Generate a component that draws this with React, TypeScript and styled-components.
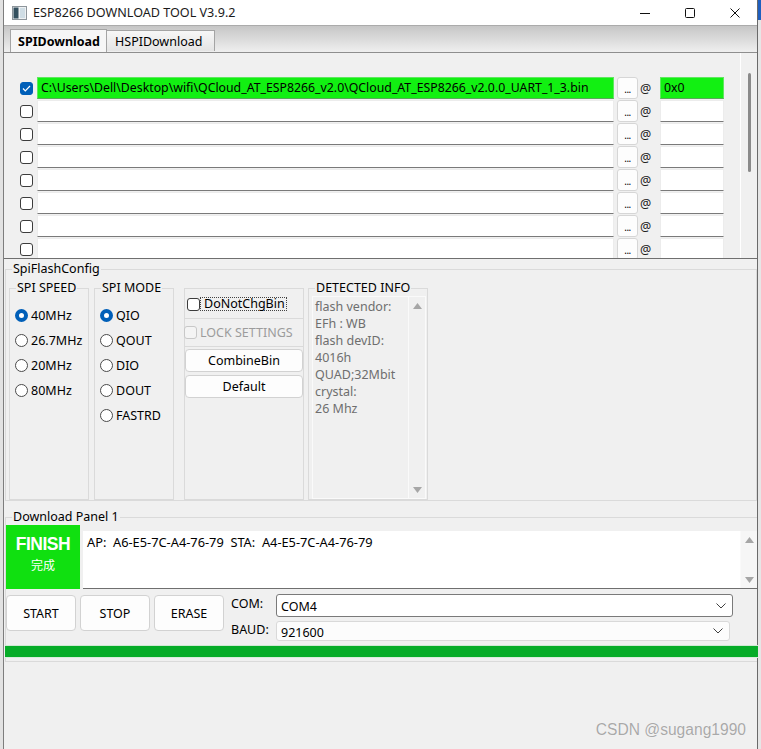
import React from "react";
import styled, { createGlobalStyle } from "styled-components";

const GlobalStyle = createGlobalStyle`
  html, body {
    margin: 0;
    padding: 0;
  }
  body {
    background: #ececec;
    font-family: "Noto Sans", "Noto Sans CJK SC", sans-serif;
    font-size: 12.5px;
    color: #000;
  }
`;

const Screen = styled.div`
  width: 761px;
  height: 749px;
  display: flex;
  overflow: hidden;
  position: relative;
  background: #ececec;
`;

const Gutter = styled.div<{ $accent?: boolean }>`
  width: 3px;
  flex: none;
  background: ${(p) =>
    p.$accent
      ? "linear-gradient(#1f5fbf 0, #1f5fbf 20px, #e6e6e6 20px)"
      : "#e2e2e2"};
`;

const Window = styled.div`
  width: 755px;
  flex: none;
  box-sizing: border-box;
  border-left: 1px solid #7d7d7d;
  border-right: 1px solid #6a6a6a;
  background: #f0f0f0;
  display: flex;
  flex-direction: column;
`;

/* ---------- title bar ---------- */

const TitleBar = styled.div`
  height: 26px;
  flex: none;
  box-sizing: border-box;
  background: #fff;
  border-bottom: 1px solid #ababab;
  display: flex;
  align-items: center;
  padding-left: 8px;
`;

const TitleText = styled.span`
  margin-left: 6px;
  font-size: 12.6px;
  color: #1a1a1a;
`;

const Controls = styled.div`
  margin-left: auto;
  display: flex;
  height: 100%;
`;

const ControlButton = styled.div`
  width: 45px;
  height: 100%;
  display: flex;
  align-items: center;
  justify-content: center;
`;

const AppIcon = () => (
  <svg width="15" height="14" viewBox="0 0 15 14">
    <rect x="0.5" y="0.5" width="14" height="13" fill="#eef1f3" stroke="#8d959b" />
    <rect x="1.5" y="1.5" width="5" height="11" fill="#34505f" />
    <rect x="8" y="2" width="5" height="10" fill="#cfdde5" />
  </svg>
);

/* ---------- tabs ---------- */

const TabStrip = styled.div`
  height: 26px;
  flex: none;
  box-sizing: border-box;
  background: linear-gradient(#c6c6c6, #efefef);
  display: flex;
  align-items: flex-end;
  padding-left: 6px;
`;

const Tab = styled.div<{ $active?: boolean }>`
  box-sizing: border-box;
  height: ${(p) => (p.$active ? "23px" : "21px")};
  margin-bottom: ${(p) => (p.$active ? "0" : "1px")};
  padding: 0 ${(p) => (p.$active ? "7px" : "8px")};
  display: flex;
  align-items: center;
  border: 1px solid #a4a4a4;
  border-bottom: none;
  border-left: ${(p) => (p.$active ? "1px solid #a4a4a4" : "none")};
  background: ${(p) => (p.$active ? "#f6f6f6" : "linear-gradient(#f7f7f7, #e4e4e4)")};
  font-weight: ${(p) => (p.$active ? 700 : 400)};
  font-size: 12.5px;
  width: ${(p) => (p.$active ? "97px" : "108px")};
`;

/* ---------- file list ---------- */

const FileList = styled.div`
  flex: none;
  height: 207px;
  box-sizing: border-box;
  border-top: 1px solid #8e8e8e;
  border-bottom: 1px solid #6f6f6f;
  display: flex;
  overflow: hidden;
`;

const Rows = styled.div`
  flex: 1;
  padding: 24px 0 0 16px;
  display: flex;
  flex-direction: column;
  gap: 1px;
`;

const FileRow = styled.div`
  height: 22px;
  flex: none;
  display: flex;
  align-items: center;
  gap: 0;
`;

const CheckBox = styled.span<{ $checked?: boolean; $disabled?: boolean }>`
  width: 13px;
  height: 13px;
  flex: none;
  box-sizing: border-box;
  border-radius: 3px;
  border: 1px solid
    ${(p) => (p.$checked ? "#005fb8" : p.$disabled ? "#c8c8c8" : "#3c3c3c")};
  background: ${(p) => (p.$checked ? "#005fb8" : p.$disabled ? "#f4f4f4" : "#fff")};
  display: flex;
  align-items: center;
  justify-content: center;
`;

const RowCheck = styled(CheckBox)`
  margin-right: 4px;
`;

const TextField = styled.div<{ $width: number; $ok?: boolean }>`
  width: ${(p) => p.$width}px;
  height: 22px;
  flex: none;
  box-sizing: border-box;
  background: ${(p) => (p.$ok ? "#12f012" : "#fff")};
  border: 1px solid ${(p) => (p.$ok ? "#5fe85f" : "#ececec")};
  border-bottom: 1px solid ${(p) => (p.$ok ? "#5aa85a" : "#7a7a7a")};
  padding-left: 3px;
  font-size: 12.3px;
  line-height: 20px;
  white-space: nowrap;
  overflow: hidden;
`;

const BrowseButton = styled.div`
  width: 21px;
  height: 22px;
  flex: none;
  box-sizing: border-box;
  margin: 0 0 0 3px;
  background: #fdfdfd;
  border: 1px solid #d6d6d6;
  border-radius: 3px;
  font-size: 10px;
  line-height: 22px;
  text-align: center;
  letter-spacing: -0.5px;
`;

const AtSign = styled.span`
  width: 22px;
  flex: none;
  padding-left: 2px;
  box-sizing: border-box;
  font-size: 12.5px;
  color: #222;
`;

const ScrollTrack = styled.div`
  width: 17px;
  flex: none;
  box-sizing: border-box;
  border-left: 1px solid #fff;
`;

const ScrollThumb = styled.div`
  width: 3px;
  height: 99px;
  margin: 20px 0 0 7px;
  background: #8a8a8a;
  border-radius: 2px;
`;

/* ---------- group boxes ---------- */

const GroupBox = styled.fieldset<{ $width?: number }>`
  margin: 0;
  padding: 0;
  min-width: 0;
  box-sizing: border-box;
  border: 1px solid #dadada;
  ${(p) => (p.$width ? `width: ${p.$width}px; flex: none;` : "")}
`;

const Legend = styled.legend`
  padding: 0 1px;
  margin-left: 6px;
  font-size: 12.5px;
  line-height: 16px;
`;

const ConfigBox = styled(GroupBox)`
  margin: 2px 0 0 1px;
  width: 752px;
  height: 240px;
  flex: none;
`;

const ConfigRow = styled.div`
  display: flex;
  margin: 3px 0 0 3px;
  height: 220px;
`;

const OptionList = styled.div`
  display: flex;
  flex-direction: column;
  padding: 7px 0 0 5px;
`;

const Option = styled.label`
  height: 25px;
  display: flex;
  align-items: center;
  gap: 3px;
  font-size: 12.5px;
`;

const Radio = styled.span<{ $on?: boolean }>`
  width: 13px;
  height: 13px;
  flex: none;
  box-sizing: border-box;
  border-radius: 50%;
  border: ${(p) => (p.$on ? "4px solid #005fb8" : "1px solid #4a4a4a")};
  background: #fff;
`;

const ActionGroup = styled(GroupBox)`
  margin-top: 8px;
  height: 212px;
  padding-top: 8px;
  display: flex;
  flex-direction: column;
`;

const FocusCheck = styled.label`
  display: flex;
  align-items: center;
  height: 14px;
  padding-left: 2px;
  font-size: 12.5px;
`;

const FocusLabel = styled.span`
  padding: 0 1px 0 3px;
  border: 1px dotted #444;
  line-height: 12px;
`;

const LockBox = styled.div`
  margin: 7px 0 0 -1px;
  height: 29px;
  box-sizing: border-box;
  border-top: 1px solid #dadada;
  border-bottom: 1px solid #dadada;
  display: flex;
  align-items: center;
  gap: 3px;
  color: #9c9c9c;
  font-size: 12.5px;
`;

const PushButton = styled.div<{ $h: number; $gap?: number }>`
  height: ${(p) => p.$h}px;
  margin-top: ${(p) => p.$gap || 0}px;
  box-sizing: border-box;
  background: #fdfdfd;
  border: 1px solid #d2d2d2;
  border-radius: 4px;
  display: flex;
  align-items: center;
  justify-content: center;
  font-size: 12.5px;
`;

const InfoGroup = styled(GroupBox)`
  margin-left: 4px;
`;

const InfoBox = styled.div`
  margin: 0 1px 0 3px;
  height: 203px;
  box-sizing: border-box;
  border: 1px solid #fafafa;
  display: flex;
`;

const InfoText = styled.div`
  flex: 1;
  padding: 1px 0 0 2px;
  color: #6e6e6e;
  font-size: 12.5px;
  line-height: 17px;
`;

const MiniScroll = styled.div<{ $bg?: string }>`
  width: 17px;
  flex: none;
  box-sizing: border-box;
  border-left: 1px solid #fafafa;
  background: ${(p) => p.$bg || "transparent"};
  display: flex;
  flex-direction: column;
  align-items: center;
  justify-content: space-between;
  padding: 6px 0 5px;
`;

const Arrow = ({ up }: { up?: boolean }) => (
  <svg width="9" height="6" viewBox="0 0 9 6">
    <path d={up ? "M0 6 L4.5 0 L9 6 Z" : "M0 0 L4.5 6 L9 0 Z"} fill="#a6a6a6" />
  </svg>
);

/* ---------- download panel ---------- */

const DownloadBox = styled(GroupBox)`
  margin: 9px 0 0 1px;
  width: 752px;
  height: 152px;
  flex: none;
  border-right: none;
`;

const DownloadLegend = styled(Legend)`
  line-height: 14px;
  margin-bottom: 1px;
`;

const StatusRow = styled.div`
  display: flex;
  align-items: flex-end;
  height: 64px;
`;

const FinishTile = styled.div`
  width: 74px;
  height: 64px;
  flex: none;
  background: #10e010;
  color: #fff;
  display: flex;
  flex-direction: column;
  align-items: center;
  padding-top: 9px;
  box-sizing: border-box;
`;

const FinishTitle = styled.div`
  font-family: "Liberation Sans", Arial, sans-serif;
  font-weight: 700;
  font-size: 17.5px;
  line-height: 21px;
  letter-spacing: -0.5px;
`;

const FinishSub = styled.div`
  font-family: "Noto Sans CJK SC", sans-serif;
  font-size: 12px;
  line-height: 18px;
  margin-top: 1px;
`;

const LogArea = styled.div`
  flex: 1;
  margin-left: 3px;
  height: 58px;
  box-sizing: border-box;
  background: #fff;
  border-bottom: 1px solid #6f6f6f;
  display: flex;
`;

const LogText = styled.div`
  flex: 1;
  padding: 3px 0 0 4px;
  font-size: 12.8px;
  line-height: 16px;
  white-space: pre;
`;

const ControlRow = styled.div`
  display: flex;
  margin-top: 6px;
  gap: 4px;
`;

const ActionButton = styled(PushButton)`
  width: 70px;
`;

const PortGrid = styled.div`
  margin: -1px 0 0 3px;
  display: grid;
  grid-template-columns: 45px auto;
  row-gap: 4px;
  align-items: start;
`;

const PortLabel = styled.span<{ $top: number }>`
  font-size: 12.5px;
  line-height: 16px;
  padding-top: ${(p) => p.$top}px;
`;

const Combo = styled.div<{ $width: number; $h: number; $focus?: boolean }>`
  width: ${(p) => p.$width}px;
  height: ${(p) => p.$h}px;
  box-sizing: border-box;
  border: 1px solid ${(p) => (p.$focus ? "#7a7a7a" : "#d9d9d9")};
  border-radius: 3px;
  background: ${(p) => (p.$focus ? "#fff" : "#fcfcfc")};
  display: flex;
  align-items: center;
  padding: 0 6px 0 4px;
  font-size: 12.5px;
`;

const ComboValue = styled.span<{ $drop?: number }>`
  flex: 1;
  padding-top: ${(p) => p.$drop || 1}px;
`;

const Chevron = () => (
  <svg width="10" height="6" viewBox="0 0 10 6">
    <path d="M0.5 0.5 L5 5 L9.5 0.5" fill="none" stroke="#404040" strokeWidth="1" />
  </svg>
);

const Progress = styled.div`
  margin: 4px -1px 0 -1px;
  height: 13px;
  box-sizing: border-box;
  background: #06ac28;
  border-top: 1px solid #cfe9d3;
  border-bottom: 1px solid #d8eddb;
`;

const Watermark = styled.div`
  position: absolute;
  right: 15px;
  top: 721px;
  font-family: "Liberation Sans", Arial, sans-serif;
  font-size: 15.6px;
  color: #a9a9a9;
  text-shadow: 0 0 1px #fff;
`;

const Check = () => (
  <svg width="9" height="7" viewBox="0 0 9 7">
    <path d="M1 3.5 L3.3 5.8 L8 1" fill="none" stroke="#fff" strokeWidth="1.2" />
  </svg>
);

const files = [
  "C:\\Users\\Dell\\Desktop\\wifi\\QCloud_AT_ESP8266_v2.0\\QCloud_AT_ESP8266_v2.0.0_UART_1_3.bin",
  "",
  "",
  "",
  "",
  "",
  "",
  "",
];

const speeds = ["40MHz", "26.7MHz", "20MHz", "80MHz"];
const modes = ["QIO", "QOUT", "DIO", "DOUT", "FASTRD"];
const detected = [
  "flash vendor:",
  "EFh : WB",
  "flash devID:",
  "4016h",
  "QUAD;32Mbit",
  "crystal:",
  "26 Mhz",
];

export default function App() {
  return (
    <Screen>
      <GlobalStyle />
      <Gutter />
      <Window>
        <TitleBar>
          <AppIcon />
          <TitleText>ESP8266 DOWNLOAD TOOL V3.9.2</TitleText>
          <Controls>
            <ControlButton>
              <svg width="10" height="10" viewBox="0 0 10 10">
                <path d="M0 5.5 H10" stroke="#111" strokeWidth="1" />
              </svg>
            </ControlButton>
            <ControlButton>
              <svg width="10" height="10" viewBox="0 0 10 10">
                <rect x="0.5" y="0.5" width="9" height="9" rx="1" fill="none" stroke="#111" />
              </svg>
            </ControlButton>
            <ControlButton>
              <svg width="10" height="10" viewBox="0 0 10 10">
                <path d="M0.5 0.5 L9.5 9.5 M9.5 0.5 L0.5 9.5" stroke="#111" strokeWidth="1" />
              </svg>
            </ControlButton>
          </Controls>
        </TitleBar>

        <TabStrip>
          <Tab $active>SPIDownload</Tab>
          <Tab>HSPIDownload</Tab>
        </TabStrip>

        <FileList>
          <Rows>
            {files.map((path, i) => (
              <FileRow key={i}>
                <RowCheck $checked={i === 0}>{i === 0 && <Check />}</RowCheck>
                <TextField $width={577} $ok={i === 0}>
                  {path}
                </TextField>
                <BrowseButton>...</BrowseButton>
                <AtSign>@</AtSign>
                <TextField $width={64} $ok={i === 0}>
                  {i === 0 ? "0x0" : ""}
                </TextField>
              </FileRow>
            ))}
          </Rows>
          <ScrollTrack>
            <ScrollThumb />
          </ScrollTrack>
        </FileList>

        <ConfigBox>
          <Legend>SpiFlashConfig</Legend>
          <ConfigRow>
            <GroupBox $width={80}>
              <Legend>SPI SPEED</Legend>
              <OptionList>
                {speeds.map((s, i) => (
                  <Option key={s}>
                    <Radio $on={i === 0} />
                    {s}
                  </Option>
                ))}
              </OptionList>
            </GroupBox>
            <GroupBox $width={80} style={{ marginLeft: 5 }}>
              <Legend>SPI MODE</Legend>
              <OptionList>
                {modes.map((m, i) => (
                  <Option key={m}>
                    <Radio $on={i === 0} />
                    {m}
                  </Option>
                ))}
              </OptionList>
            </GroupBox>
            <ActionGroup $width={120} style={{ marginLeft: 10 }}>
              <FocusCheck>
                <CheckBox />
                <FocusLabel>DoNotChgBin</FocusLabel>
              </FocusCheck>
              <LockBox>
                <CheckBox $disabled />
                LOCK SETTINGS
              </LockBox>
              <PushButton $h={23} $gap={2}>
                CombineBin
              </PushButton>
              <PushButton $h={23} $gap={3}>
                Default
              </PushButton>
            </ActionGroup>
            <InfoGroup $width={120}>
              <Legend>DETECTED INFO</Legend>
              <InfoBox>
                <InfoText>
                  {detected.map((line) => (
                    <div key={line}>{line}</div>
                  ))}
                </InfoText>
                <MiniScroll>
                  <Arrow up />
                  <Arrow />
                </MiniScroll>
              </InfoBox>
            </InfoGroup>
          </ConfigRow>
        </ConfigBox>

        <DownloadBox>
          <DownloadLegend>Download Panel 1</DownloadLegend>
          <StatusRow>
            <FinishTile>
              <FinishTitle>FINISH</FinishTitle>
              <FinishSub>完成</FinishSub>
            </FinishTile>
            <LogArea>
              <LogText>AP:  A6-E5-7C-A4-76-79  STA:  A4-E5-7C-A4-76-79</LogText>
              <MiniScroll $bg="#f6f6f6">
                <Arrow up />
                <Arrow />
              </MiniScroll>
            </LogArea>
          </StatusRow>
          <ControlRow>
            <ActionButton $h={36}>START</ActionButton>
            <ActionButton $h={36}>STOP</ActionButton>
            <ActionButton $h={36}>ERASE</ActionButton>
            <PortGrid>
              <PortLabel $top={2}>COM:</PortLabel>
              <Combo $width={457} $h={23} $focus>
                <ComboValue>COM4</ComboValue>
                <Chevron />
              </Combo>
              <PortLabel $top={1}>BAUD:</PortLabel>
              <Combo $width={454} $h={20}>
                <ComboValue $drop={3}>921600</ComboValue>
                <Chevron />
              </Combo>
            </PortGrid>
          </ControlRow>
          <Progress />
        </DownloadBox>
      </Window>
      <Gutter $accent />
      <Watermark>CSDN @sugang1990</Watermark>
    </Screen>
  );
}
